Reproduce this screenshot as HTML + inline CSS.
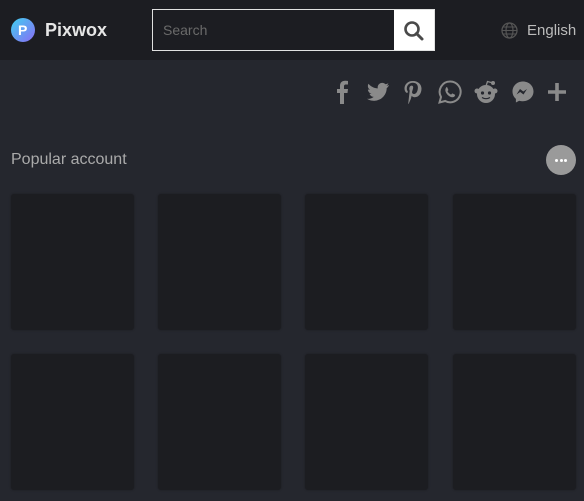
<!DOCTYPE html>
<html><head><meta charset="utf-8"><style>
*{margin:0;padding:0;box-sizing:border-box}
body{width:584px;height:501px;background:#25272e;font-family:"Liberation Sans",sans-serif;position:relative;overflow:hidden}
.hd{position:absolute;left:0;top:0;width:584px;height:60px;background:#1c1d22}
.logo{position:absolute;left:11px;top:18px;width:24px;height:24px;border-radius:50%;background:linear-gradient(135deg,#3fd0f0,#8a6cf5)}
.logo span{position:absolute;left:7px;top:4px;color:#fff;font-weight:bold;font-size:14px}
.brand{position:absolute;left:45px;top:20px;color:#e6e6e6;font-weight:bold;font-size:18px}
.search{position:absolute;left:152px;top:9px;width:283px;height:42px;border:1px solid #e0e0e0;background:#1c1d22}
.search span{position:absolute;left:10px;top:12px;color:#6a6a6a;font-size:14px}
.btn{position:absolute;right:0;top:0;width:40px;height:40px;background:#fff}
.lang{position:absolute;left:527px;top:22px;color:#bbb;font-size:15px}
.card{position:absolute;width:123px;height:136px;background:#1c1d21;border-radius:3px;box-shadow:0 0 2px rgba(0,0,0,.3)}
.title{position:absolute;left:11px;top:151px;color:#aaa;font-size:16px}
.more{position:absolute;left:546px;top:145px;width:30px;height:30px;border-radius:50%;background:#9a9a9a}
.more i{position:absolute;top:14px;width:3px;height:3px;border-radius:50%;background:#fff}
svg.i{position:absolute;top:80px}
</style></head><body>
<div class="hd">
<div class="logo"><span>P</span></div>
<div class="brand">Pixwox</div>
<div class="search"><span>Search</span><div class="btn"><svg width="40" height="40"><circle cx="18" cy="19" r="6.5" fill="none" stroke="#4a4a4a" stroke-width="2.6"/><line x1="22.500" y1="23.500" x2="28" y2="29" stroke="#4a4a4a" stroke-width="3" stroke-linecap="round"/></svg></div></div>
<svg style="position:absolute;left:501px;top:22px" width="17" height="17"><circle cx="8.5" cy="8.5" r="7.5" fill="none" stroke="#555" stroke-width="1.3"/><ellipse cx="8.5" cy="8.5" rx="3.5" ry="7.5" fill="none" stroke="#555" stroke-width="1.2"/><line x1="1" y1="8.5" x2="16" y2="8.5" stroke="#555"/><line x1="2.5" y1="5" x2="14.5" y2="5" stroke="#555"/><line x1="2.5" y1="12" x2="14.5" y2="12" stroke="#555"/></svg>
<div class="lang">English</div>
</div>
<svg class="i" style="left:334px" width="16" height="24"><path d="M10 24V13h3.5l.5-4h-4V6.5c0-1.2.4-2 2-2h2V1c-.4 0-1.6-.2-3-.2-3 0-5 1.8-5 5.2V9H3v4h3v11z" fill="#8a8a8a"/></svg>
<svg class="i" style="left:366px" width="24" height="24"><path d="M23 5c-.8.4-1.7.6-2.6.7.9-.6 1.6-1.4 2-2.5-.9.5-1.9.9-2.9 1.1a4.5 4.5 0 00-7.7 4.1C8 8.2 4.7 6.4 2.5 3.7c-1.3 2.2-.5 4.8 1.4 6.1-.7 0-1.4-.2-2-.6 0 2.2 1.6 4.1 3.6 4.5-.7.2-1.4.2-2 .1.6 1.8 2.3 3.1 4.2 3.1A9 9 0 011 18.8 12.8 12.8 0 0020.700 8.1c.9-.6 1.7-1.5 2.300-3.1z" fill="#8a8a8a"/></svg>
<svg class="i" style="left:403px" width="20" height="24"><path d="M10 1C4 1 1.500 5 1.500 8.500c0 2 .8 3.800 2.400 4.500.3.100.5 0 .6-.3l.3-1c.1-.3 0-.4-.2-.7-.5-.6-.8-1.300-.8-2.400 0-3 2.300-5.800 6-5.800 3.300 0 5.100 2 5.100 4.700 0 3.500-1.600 6.500-3.900 6.500-1.300 0-2.200-1-1.900-2.300.4-1.500 1.100-3.200 1.100-4.300 0-1-.5-1.800-1.600-1.800-1.300 0-2.300 1.300-2.300 3.100 0 1.100.4 1.900.4 1.900L5.400 22c-.2 1-.1 2.400 0 2.400L7.800 19l.9-3.300c.4.800 1.700 1.500 3 1.500 4 0 6.800-3.700 6.800-8.600C18.500 4.500 15.200 1 10 1z" fill="#8a8a8a"/></svg>
<svg class="i" style="left:438px" width="24" height="24"><path d="M12 1.500A10.400 10.400 0 003 17L1.500 22.500 7.200 21A10.400 10.400 0 1012 1.500z" fill="none" stroke="#8a8a8a" stroke-width="2"/><path d="M8.500 7c.4 0 .6 0 .8.500l1 2.300c.1.300 0 .5-.2.700l-.6.700c.800 1.600 2 2.700 3.600 3.400l.8-.900c.2-.3.400-.3.700-.2l2.200 1.100c.3.100.4.300.3.700-.2 1.200-1.400 2-2.500 2-3.500-.300-7-3.700-7.300-7.100 0-1.200.5-2.300 1.200-3.200z" fill="#8a8a8a"/></svg>
<svg class="i" style="left:474px" width="24" height="24"><circle cx="12" cy="14" r="9" fill="#8a8a8a"/><circle cx="3" cy="11" r="2.500" fill="#8a8a8a"/><circle cx="21" cy="11" r="2.500" fill="#8a8a8a"/><circle cx="19" cy="3" r="2" fill="#8a8a8a"/><path d="M12 6l1.500-4.500 5.500 1.500" stroke="#8a8a8a" fill="none" stroke-width="1.300"/><circle cx="8.500" cy="13" r="1.600" fill="#25272e"/><circle cx="15.500" cy="13" r="1.600" fill="#25272e"/><path d="M8 17.500c2.500 1.500 5.500 1.500 8 0" stroke="#25272e" fill="none" stroke-width="1.200"/></svg>
<svg class="i" style="left:511px" width="24" height="24"><path d="M12 1.500C6 1.500 1.500 5.800 1.500 11.500c0 3 1.300 5.600 3.400 7.400v3.600l3.300-1.800c1.200.3 2.400.5 3.800.5 6 0 10.500-4.300 10.500-9.800S18 1.500 12 1.500z" fill="#8a8a8a"/><path d="M5.500 14.500l3.500-5.500 3.300 2.500 3.700-2.500-3.500 5.500-3.300-2.500z" fill="#25272e"/></svg>
<svg class="i" style="left:546px" width="22" height="24"><path d="M11 3v18M2 12h18" stroke="#8a8a8a" stroke-width="3.600"/></svg>
<div class="title">Popular account</div>
<div class="more"><i style="left:9px"></i><i style="left:13.5px"></i><i style="left:18px"></i></div>
<div class="card" style="left:11px;top:194px"></div>
<div class="card" style="left:158px;top:194px"></div>
<div class="card" style="left:305px;top:194px"></div>
<div class="card" style="left:453px;top:194px"></div>
<div class="card" style="left:11px;top:354px"></div>
<div class="card" style="left:158px;top:354px"></div>
<div class="card" style="left:305px;top:354px"></div>
<div class="card" style="left:453px;top:354px"></div>
</body></html>
